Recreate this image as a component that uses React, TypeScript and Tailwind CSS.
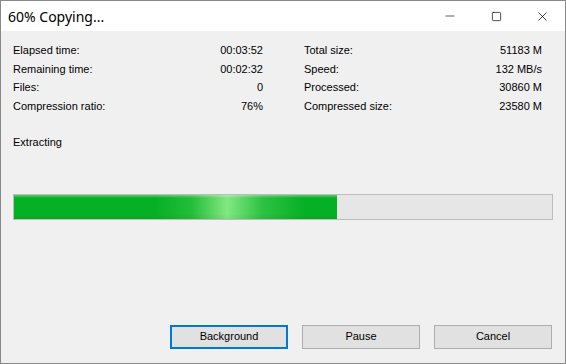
import { Minus, Square, X } from "lucide-react";

const LEFT = [
  ["Elapsed time:", "00:03:52"],
  ["Remaining time:", "00:02:32"],
  ["Files:", "0"],
  ["Compression ratio:", "76%"],
];

const RIGHT = [
  ["Total size:", "51183 M"],
  ["Speed:", "132 MB/s"],
  ["Processed:", "30860 M"],
  ["Compressed size:", "23580 M"],
];

function StatColumn({ rows, width }: { rows: string[][]; width: string }) {
  return (
    <div className={`flex flex-col ${width}`}>
      {rows.map(([label, value]) => (
        <div key={label} className="flex h-[18.5px] items-center justify-between">
          <span>{label}</span>
          <span>{value}</span>
        </div>
      ))}
    </div>
  );
}

export default function App() {
  const progress = 60;

  return (
    <div className="flex h-[364px] w-[566px] flex-col border border-[#888888] bg-[#f0f0f0] font-['Liberation_Sans',Arial,sans-serif] text-[11px] text-black">
      {/* Title bar */}
      <div className="flex h-[30px] shrink-0 items-center bg-white">
        <span className="flex-1 pl-[7px] font-['Noto_Sans',sans-serif] text-[14px] text-black">
          60% Copying...
        </span>
        <div className="flex h-full">
          <div className="flex w-[46px] items-center justify-center">
            <Minus className="h-[14px] w-[14px]" strokeWidth={1.1} />
          </div>
          <div className="flex w-[46px] items-center justify-center">
            <Square className="h-[11px] w-[11px]" strokeWidth={1.5} />
          </div>
          <div className="flex w-[46px] items-center justify-center">
            <X className="h-[15px] w-[15px]" strokeWidth={1.2} />
          </div>
        </div>
      </div>

      {/* Body */}
      <div className="flex flex-1 flex-col px-[12px] pt-[10px]">
        <div className="flex">
          <StatColumn rows={LEFT} width="w-[250px]" />
          <div className="w-[41px]" />
          <StatColumn rows={RIGHT} width="w-[238px]" />
        </div>

        <div className="mt-[19px] h-[16px] leading-[16px]">Extracting</div>

        <div className="mt-[44px] flex h-[26px] w-[540px] border border-[#bcbcbc] bg-[#e6e6e6]">
          <div
            className="relative h-full overflow-hidden bg-[#06b025]"
            style={{ width: `${progress}%` }}
          >
            <div className="absolute inset-0 bg-[linear-gradient(90deg,transparent_0%,transparent_44%,rgba(60,200,75,0.55)_55%,rgba(130,232,130,1)_66%,rgba(70,205,85,0.6)_77%,transparent_90%,transparent_100%)]" />
            <div className="absolute inset-0 bg-[linear-gradient(180deg,rgba(255,255,255,0.35)_0%,rgba(255,255,255,0)_12%,rgba(0,0,0,0)_80%,rgba(0,0,0,0.05)_100%)]" />
          </div>
        </div>

        <div className="mt-auto mb-[14px] flex justify-end gap-[14px] pr-[1px]">
          <button className="h-[24px] w-[118px] border-2 border-[#0078d7] bg-[#e1e1e1] pb-[2px]">
            Background
          </button>
          <button className="h-[24px] w-[118px] border border-[#adadad] bg-[#e1e1e1] pb-[2px]">
            Pause
          </button>
          <button className="h-[24px] w-[118px] border border-[#adadad] bg-[#e1e1e1] pb-[2px]">
            Cancel
          </button>
        </div>
      </div>
    </div>
  );
}
